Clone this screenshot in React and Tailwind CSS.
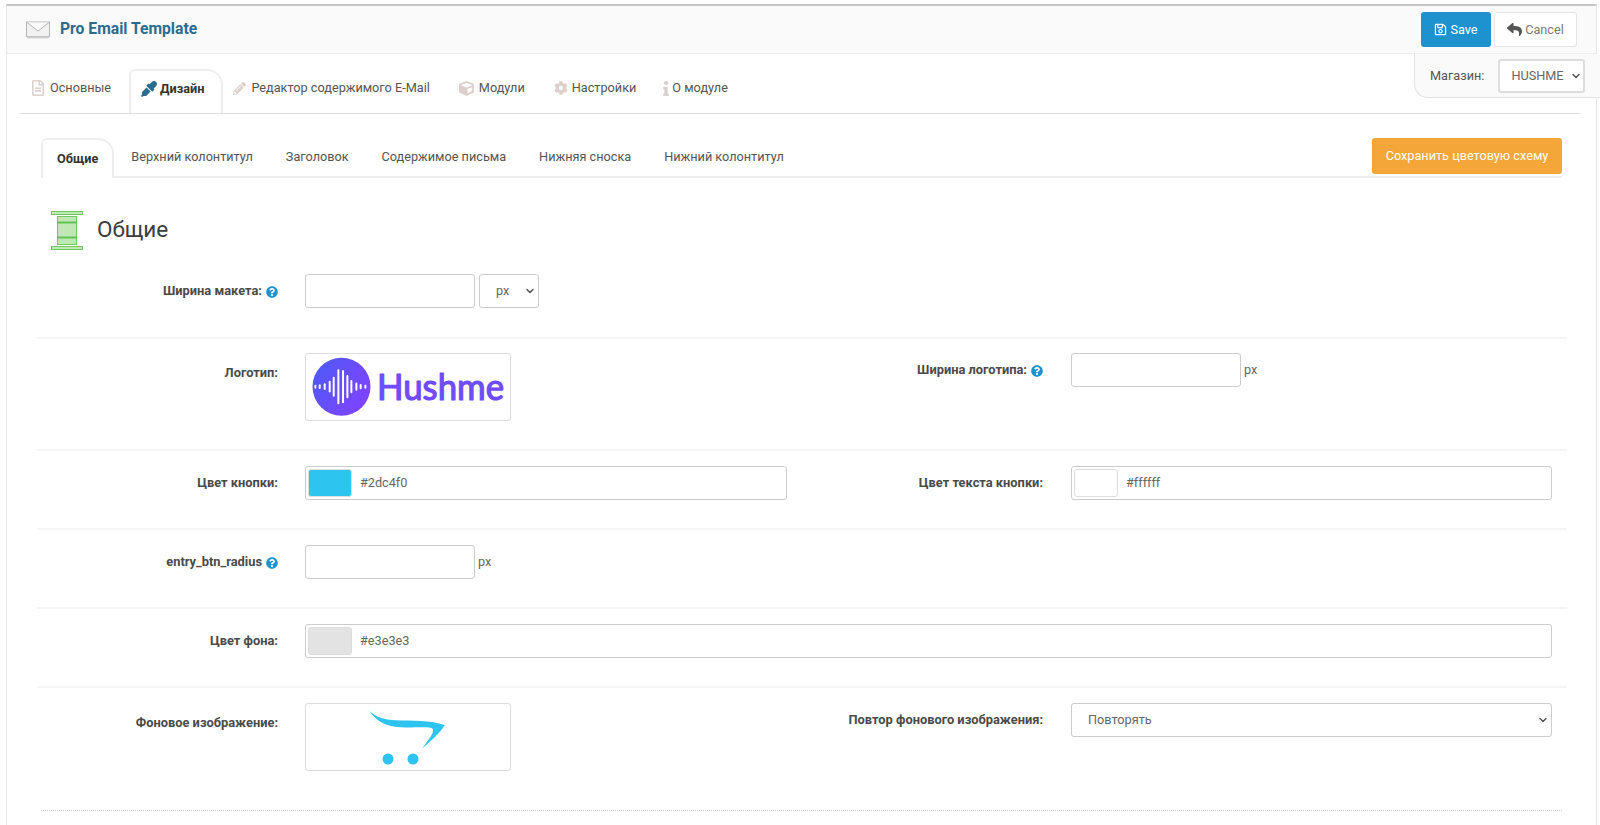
import React from "react";
import {
  FaRegSave,
  FaReply,
  FaQuestionCircle,
  FaCog,
  FaCube,
  FaInfo,
  FaPencilAlt,
  FaEyeDropper,
  FaRegFileAlt,
} from "react-icons/fa";
import { ChevronDown } from "lucide-react";

const mainTabs = [
  { name: "Основные", cls: "pl-3 pr-[15px] gap-[6px]", icon: <FaRegFileAlt size={16} className="w-[12px]" /> },
  { name: "Дизайн", cls: "pl-[10px] pr-[17px] gap-[3px]", icon: <FaEyeDropper size={16} />, active: true },
  { name: "Редактор содержимого E-Mail", cls: "pl-[9px] pr-[15px] gap-[5px]", icon: <FaPencilAlt size={13} /> },
  { name: "Модули", cls: "pl-[13px] pr-[15px] gap-[5px]", icon: <FaCube size={15} /> },
  { name: "Настройки", cls: "pl-[13px] pr-[15px] gap-[4px]", icon: <FaCog size={14} /> },
  { name: "О модуле", cls: "pl-[11px] pr-[15px] gap-[3px]", icon: <FaInfo size={15} className="w-[6px]" /> },
];

const subTabs = ["Общие", "Верхний колонтитул", "Заголовок", "Содержимое письма", "Нижняя сноска", "Нижний колонтитул"];

const bars = [
  [47, 12], [60, 14], [75, 20], [90, 35], [102, 60], [116, 105],
  [130, 100], [143, 70], [155, 40], [170, 25], [183, 16], [197, 12],
];

function MailIcon() {
  return (
    <svg viewBox="0 0 24 18" className="w-[24px] h-[18px]">
      <rect x="0.5" y="1" width="23" height="14.5" fill="#f1f1f1" stroke="#b5b5b5" />
      <path d="M1 1.5 L12 10 L23 1.5" fill="#fafafa" stroke="#b5b5b5" />
      <rect x="1" y="15.5" width="22" height="2" fill="#cfcfcf" />
    </svg>
  );
}

function Label({ text, help, top, left }) {
  return (
    <div className={`${left ? "w-[241px]" : "w-[240px]"} shrink-0 flex justify-end gap-1 text-[12.85px] font-bold text-[#4a4a4a] ${top ? "pt-[10px]" : "items-center h-[34px]"}`}>
      <span>{text}</span>
      {help && <FaQuestionCircle size={12} className="text-[#1e91cf] mt-[2px]" />}
    </div>
  );
}

function TextBox({ unit, width }) {
  return (
    <div className="flex items-center gap-[3px] h-[34px]">
      <input className={`${width} h-[34px] bg-white border border-[#ccc] rounded-[3px]`} />
      {unit && <span className="text-[#666]">{unit}</span>}
    </div>
  );
}

function SelectBox({ value, className, inner }) {
  return (
    <div className={`relative h-[34px] ${className}`}>
      <select className={`appearance-none w-full h-full bg-white rounded-[3px] text-[#666] ${inner}`}>
        <option>{value}</option>
      </select>
      <ChevronDown size={12} strokeWidth={3} className="absolute right-[3px] top-[11px] text-[#555] pointer-events-none" />
    </div>
  );
}

function ColorBox({ color, value }) {
  return (
    <div className="flex-1 h-[34px] border border-[#ccc] rounded-[3px] flex items-center pl-[2px] gap-[8px] text-[#666]">
      <span className="w-[44px] h-[28px] rounded-[3px] border border-[#ddd]" style={{ backgroundColor: color }} />
      {value}
    </div>
  );
}

function Thumb({ children }) {
  return <div className="w-[206px] h-[68px] border border-[#ddd] rounded-[3px] bg-white">{children}</div>;
}

function HushmeLogo() {
  return (
    <svg viewBox="0 0 204 66" className="w-[204px] h-[66px]">
      <defs>
        <linearGradient id="hush" x1="0" y1="0" x2="1" y2="0.6">
          <stop offset="0" stopColor="#4a5cf6" />
          <stop offset="1" stopColor="#7f43ff" />
        </linearGradient>
      </defs>
      <circle cx="35.5" cy="32.7" r="29" fill="url(#hush)" />
      {bars.map(([x, h]) => (
        <rect key={x} x={x / 3 - 7.3} y={32.7 - h / 6} width="2" height={h / 3} rx="1" fill="#fff" />
      ))}
      <text
        x="71"
        y="46"
        fontFamily="Lato, sans-serif"
        fontWeight="400"
        fontSize="36"
        fill="#6f4cff"
        stroke="#6f4cff"
        strokeWidth="1.2"
        strokeLinejoin="round"
        textLength="127"
        lengthAdjust="spacingAndGlyphs"
      >
        Hushme
      </text>
    </svg>
  );
}

function CartLogo() {
  return (
    <svg viewBox="0 0 204 66" className="w-[204px] h-[66px]">
      <path
        d="M63 6.7 C70 13 78 16 90 16.2 C105 16.8 125 16 138.7 21 C135 28 125 37 116.3 44.3 C122 36 128 30 127 25 C124 22.5 115 23.5 100 23.5 C85 23.5 72 20 63 6.7Z"
        fill="#2dc4f0"
      />
      <circle cx="82" cy="55" r="5.5" fill="#2dc4f0" />
      <circle cx="107" cy="55" r="5.5" fill="#2dc4f0" />
    </svg>
  );
}

export default function App() {
  return (
    <div className="w-[1600px] h-[825px] overflow-hidden bg-white pt-1 pl-[6px] pr-[3px] font-['Roboto',sans-serif] text-[12.7px] text-[#555]">
      <div className="relative h-full border-t-2 border-x border-[#e6e6e6] border-t-[#c6c6c6]">
        {/* header */}
        <div className="h-[48px] bg-[#fafafa] border-b border-[#eee] flex items-center pl-[19px] pr-[19px]">
          <MailIcon />
          <span className="ml-[10px] pb-[2px] text-[15.7px] font-bold text-[#2b6c91]">Pro Email Template</span>
          <div className="ml-auto flex gap-[3px]">
            <button className="w-[70px] h-[35px] bg-[#1e91cf] rounded-[3px] text-white flex items-center justify-center gap-[3px]">
              <FaRegSave size={13} />
              Save
            </button>
            <button className="w-[83px] h-[35px] bg-white border border-[#e4e4e4] rounded-[3px] text-[#777] flex items-center justify-center gap-[3px]">
              <FaReply size={15} className="text-[#555]" />
              Cancel
            </button>
          </div>
        </div>

        {/* store picker */}
        <div className="absolute top-[48px] right-[-4px] w-[186px] h-[44px] bg-[#fafafa] border-l border-b border-[#e2e2e2] rounded-bl-[14px] flex items-center pl-[15px]">
          <span>Магазин:</span>
          <SelectBox value="HUSHME" className="ml-[14px] w-[87px]" inner="border-2 border-[#ddd] pl-[11px]" />
        </div>

        {/* main tabs */}
        <div className="ml-[13px] mr-[16px] pt-[15px] flex gap-px border-b border-[#ddd]">
          {mainTabs.map((t) => (
            <div
              key={t.name}
              className={`h-[44px] flex items-center pb-[6px] ${t.cls} ${
                t.active
                  ? "ml-[2px] border-t-2 border-x-2 border-[#eee] border-b-0 rounded-tl-md rounded-tr-2xl bg-white font-bold text-[#333]"
                  : "text-[#555]"
              }`}
            >
              <span className={t.active ? "text-[#2b6c91]" : "text-[#dcd0cc]"}>{t.icon}</span>
              {t.name}
            </div>
          ))}
        </div>

        <div className="pl-[30px] pr-[29px]">
          {/* sub tabs */}
          <div className="ml-1 mr-[5px] mt-6 flex gap-px items-end border-b-2 border-[#eee] h-[40px]">
            {subTabs.map((t, i) => (
              <div
                key={t}
                className={
                  i === 0
                    ? "h-[40px] -mb-[2px] flex items-center px-[14px] border-t-2 border-x-2 border-[#eee] rounded-tl-md rounded-tr-2xl bg-white font-bold text-[#333]"
                    : "h-[38px] flex items-center px-4 text-[#555]"
                }
              >
                {t}
              </div>
            ))}
            <button className="ml-auto self-start w-[190px] h-[36px] bg-[#f4a638] rounded-[3px] text-white">
              Сохранить цветовую схему
            </button>
          </div>

          {/* heading */}
          <div className="mt-[33px] mb-[24px] ml-[14px] flex items-center gap-[14px] h-[39px]">
            <svg viewBox="0 0 32 39" className="w-[32px] h-[39px]">
              <rect x="0.5" y="0.5" width="31" height="3" fill="#bfe8b5" stroke="#6ecb63" />
              <rect x="0.5" y="35.5" width="31" height="3" fill="#bfe8b5" stroke="#6ecb63" />
              <rect x="6.5" y="5.5" width="19" height="28" fill="#bfe8b5" stroke="#6ecb63" />
              <path d="M6 11.5 H26 M6 26.5 H26" stroke="#5fc354" strokeWidth="2" />
            </svg>
            <span className="pb-[2px] text-[22.5px] text-[#3c3c3c]">Общие</span>
          </div>

          {/* rows */}
          <div className="flex gap-[27px] pb-[29px] border-b-2 border-[#f5f5f5]">
            <Label text="Ширина макета:" help left />
            <div className="flex gap-1">
              <input className="w-[170px] h-[34px] bg-white border border-[#ccc] rounded-[3px]" />
              <SelectBox value="px" className="w-[60px]" inner="border border-[#ccc] pl-4" />
            </div>
          </div>

          <div className="flex pt-[14px] pb-[28px] border-b-2 border-[#f5f5f5]">
            <div className="w-[766px] flex gap-[27px]">
              <Label text="Логотип:" top left />
              <Thumb>
                <HushmeLogo />
              </Thumb>
            </div>
            <div className="flex-1 flex gap-7 pr-[15px]">
              <Label text="Ширина логотипа:" help />
              <TextBox unit="px" width="w-[170px]" />
            </div>
          </div>

          <div className="flex pt-[15px] pb-[28px] border-b-2 border-[#f5f5f5]">
            <div className="w-[766px] flex gap-[27px] pr-[16px]">
              <Label text="Цвет кнопки:" left />
              <ColorBox color="#2dc4f0" value="#2dc4f0" />
            </div>
            <div className="flex-1 flex gap-7 pr-[15px]">
              <Label text="Цвет текста кнопки:" />
              <ColorBox color="#ffffff" value="#ffffff" />
            </div>
          </div>

          <div className="flex gap-[27px] pt-[15px] pb-[28px] border-b-2 border-[#f5f5f5]">
            <Label text="entry_btn_radius" help left />
            <TextBox unit="px" width="w-[170px]" />
          </div>

          <div className="flex gap-[27px] pt-[15px] pb-[28px] pr-[15px] border-b-2 border-[#f5f5f5]">
            <Label text="Цвет фона:" left />
            <ColorBox color="#e3e3e3" value="#e3e3e3" />
          </div>

          <div className="flex pt-[15px] pb-[39px]">
            <div className="w-[766px] flex gap-[27px]">
              <Label text="Фоновое изображение:" top left />
              <Thumb>
                <CartLogo />
              </Thumb>
            </div>
            <div className="flex-1 flex gap-7 pr-[15px]">
              <Label text="Повтор фонового изображения:" />
              <SelectBox value="Повторять" className="flex-1" inner="border border-[#ccc] pl-4" />
            </div>
          </div>

          <div className="ml-1 mr-[5px] border-b border-dotted border-[#ccc]" />
        </div>
      </div>
    </div>
  );
}
